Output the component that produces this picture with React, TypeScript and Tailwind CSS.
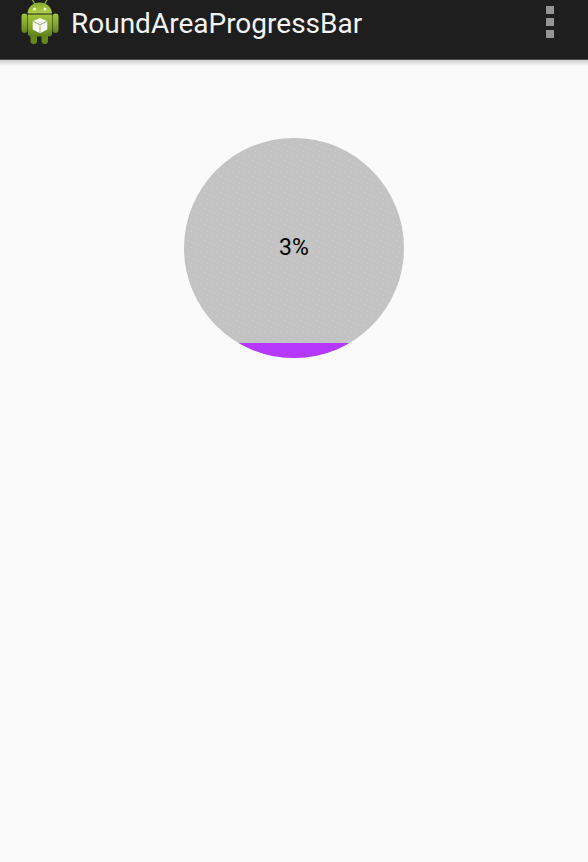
function AndroidIcon() {
  return (
    <svg className="h-11 w-[38px] shrink-0" viewBox="0 0 38 44" aria-hidden="true">
      <defs>
        <linearGradient id="body" x1="0" y1="0" x2="0" y2="1">
          <stop offset="0" stopColor="#a0c43a" />
          <stop offset="0.5" stopColor="#86ab30" />
          <stop offset="1" stopColor="#5d7f1c" />
        </linearGradient>
        <linearGradient id="head" x1="0" y1="0" x2="0" y2="1">
          <stop offset="0" stopColor="#86ab2c" />
          <stop offset="1" stopColor="#add148" />
        </linearGradient>
      </defs>
      <path d="M11.500 0l3 5M26 0l-3 5" stroke="#94b83a" strokeWidth="1.2" strokeLinecap="round" />
      <path d="M6.500 13.500C7 6.500 12 2.500 18.700 2.500S30.500 6.500 31 13.500z" fill="url(#head)" />
      <circle cx="13.500" cy="9" r="1.500" fill="#f4f8e6" />
      <circle cx="24" cy="9" r="1.500" fill="#f4f8e6" />
      <rect x="0.500" y="13.500" width="6" height="19.500" rx="3" fill="url(#body)" />
      <rect x="31.500" y="13.500" width="6" height="19.500" rx="3" fill="url(#body)" />
      <rect x="9.500" y="31" width="6.500" height="13" rx="3" fill="#64891b" />
      <rect x="20.500" y="31" width="6.500" height="13" rx="3" fill="#64891b" />
      <path d="M7 14.500h24v19a3 3 0 0 1-3 3H10a3 3 0 0 1-3-3z" fill="url(#body)" />
      <path d="M19 18l7.300 3.200v8.300L19 33.200l-7.300-3.700v-8.300z" fill="#fbfcf5" />
      <path d="M11.700 21.200L19 24.700l7.300-3.500M19 24.700v8.500" fill="none" stroke="#a9b68b" strokeWidth="1.100" />
    </svg>
  );
}

function ActionBar({ title }: { title: string }) {
  return (
    <header className="flex h-[60px] items-start justify-between border-b border-[#4a4d4b] bg-[#1e1e1e] pr-[34px] pl-[21px]">
      <div className="flex items-start gap-3">
        <AndroidIcon />
        <h1 className="text-[28px] leading-[48px] whitespace-nowrap text-[#f3f3f3]">{title}</h1>
      </div>
      <button type="button" aria-label="More options" className="flex h-11 flex-col items-center justify-center gap-1">
        <span className="size-2 bg-[#979497]" />
        <span className="size-2 bg-[#979497]" />
        <span className="size-2 bg-[#979497]" />
      </button>
    </header>
  );
}

function RoundAreaProgress({ value, level }: { value: number; level: number }) {
  return (
    <div
      role="progressbar"
      aria-label="Progress"
      aria-valuenow={value}
      aria-valuemin={0}
      aria-valuemax={100}
      className="relative flex size-[220px] items-center justify-center overflow-hidden rounded-full bg-[#c3c3c3]"
    >
      <svg className="absolute inset-0 size-full" viewBox="0 0 220 220" aria-hidden="true">
        <defs>
          <pattern id="grain" width="16" height="16" patternUnits="userSpaceOnUse">
            <path
              d="M1 2h1v1h-1zM7 1h1v1h-1zM12 4h1v1h-1zM4 6h1v1h-1zM9 8h1v1h-1zM14 10h1v1h-1zM2 11h1v1h-1zM7 13h1v1h-1zM12 15h1v1h-1z"
              fill="#d0d0d0"
            />
          </pattern>
        </defs>
        <circle cx="110" cy="110" r="108" fill="url(#grain)" />
      </svg>
      <div className="absolute inset-x-0 bottom-0 bg-[#b638fa]" style={{ height: level }} />
      <span className="relative text-[23px] leading-7 text-black">{value}%</span>
    </div>
  );
}

export default function App() {
  return (
    <div className="min-h-screen bg-[#fafafa] font-['Roboto',sans-serif]">
      <ActionBar title="RoundAreaProgressBar" />
      <div className="h-1.5 bg-linear-to-b from-[#d0cdd0] to-[#fafafa]" />
      <main className="flex justify-center pt-[72px]">
        <RoundAreaProgress value={3} level={15} />
      </main>
    </div>
  );
}
